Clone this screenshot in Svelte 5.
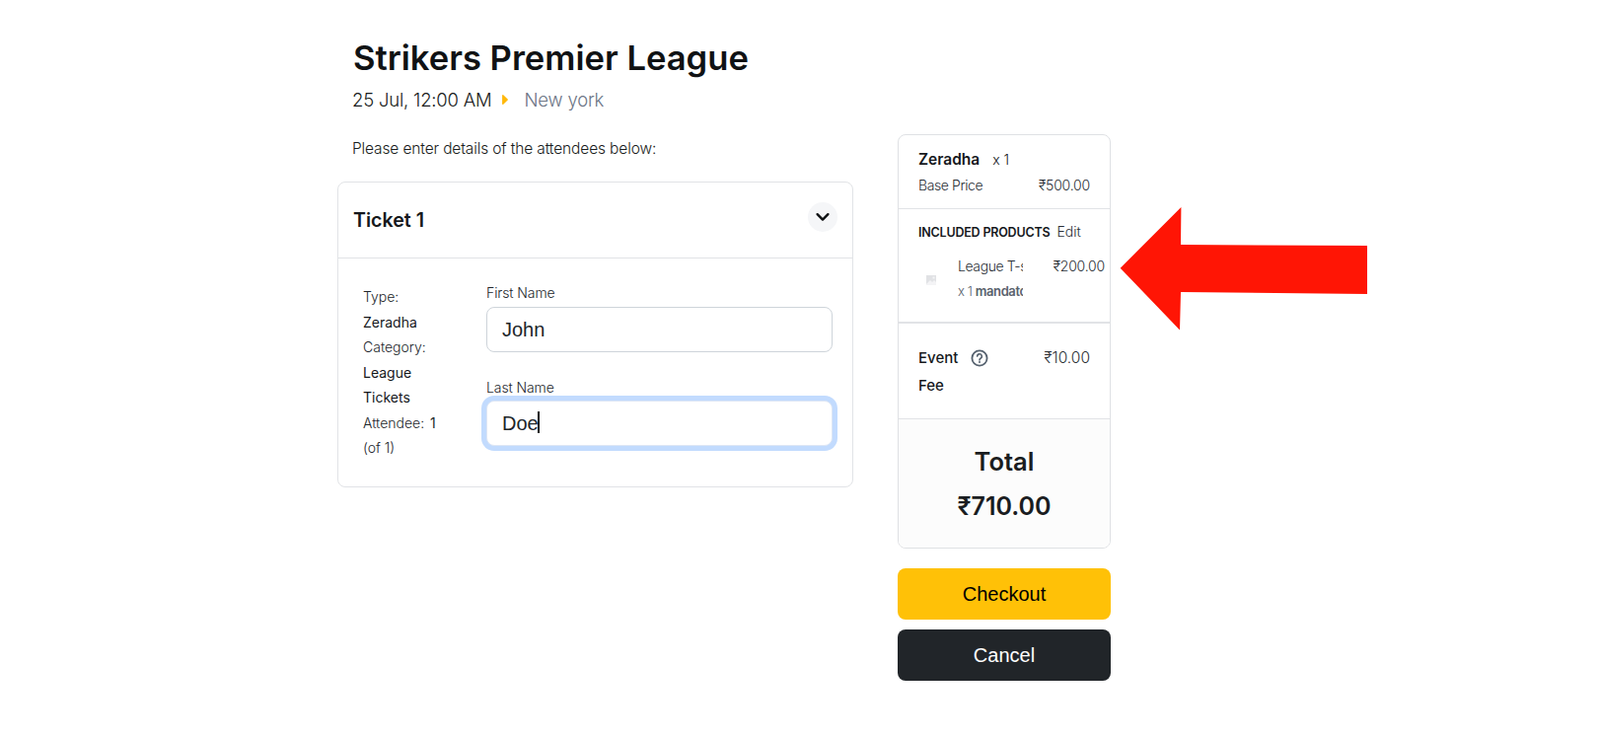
<script>
  const details = [
    { text: 'Type:', strong: false },
    { text: 'Zeradha', strong: true },
    { text: 'Category:', strong: false },
    { text: 'League', strong: true },
    { text: 'Tickets', strong: true },
    { text: 'Attendee:', strong: false, suffix: '1' },
    { text: '(of 1)', strong: false }
  ];
</script>

<div class="page">
  <header class="head">
    <h1>Strikers Premier League</h1>
    <p class="meta">
      <span>25 Jul, 12:00 AM</span>
      <svg class="tri" width="6" height="10" viewBox="0 0 6 10"><path d="M0.8 0.8 L5.2 5 L0.8 9.2 Z" fill="#ffb80a" stroke="#ffb80a" stroke-width="1.4" stroke-linejoin="round"/></svg>
      <span class="place">New york</span>
    </p>
  </header>

  <div class="columns">
    <main class="left">
      <p class="intro">Please enter details of the attendees below:</p>
      <section class="ticket">
        <div class="ticket-head">
          <h2>Ticket 1</h2>
          <button class="toggle" aria-label="Collapse">
            <svg width="16" height="16" viewBox="0 0 16 16"><path d="M2.6 5.2 L8 10.6 L13.4 5.2" fill="none" stroke="#0e1012" stroke-width="2.4" stroke-linecap="round" stroke-linejoin="round"/></svg>
          </button>
        </div>
        <div class="ticket-body">
          <div class="details">
            {#each details as d}
              <div class:strong={d.strong}>{d.text}{#if d.suffix}<b>{d.suffix}</b>{/if}</div>
            {/each}
          </div>
          <form class="fields">
            <label class="field">
              <span>First Name</span>
              <input value="John" />
            </label>
            <label class="field second">
              <span>Last Name</span>
              <span class="wrap">
                <input class="focus" value="Doe" />
                <i class="caret"></i>
              </span>
            </label>
          </form>
        </div>
      </section>
    </main>

    <aside class="right">
      <div class="summary">
        <div class="sec base">
          <div class="name"><b>Zeradha</b><span>x 1</span></div>
          <div class="line"><span>Base Price</span><span class="amt">₹500.00</span></div>
        </div>
        <div class="sec included">
          <div class="inc-title"><b>INCLUDED PRODUCTS</b><span>Edit</span></div>
          <div class="product">
            <svg class="thumb" width="10" height="10" viewBox="0 0 10 10"><rect width="10" height="10" fill="#e1e2e5"/><path d="M0 9 L4 5 L6 7 L8 5 L10 7 V10 H0 Z" fill="#f4f4f6"/><rect x="6.5" y="1.5" width="2" height="2" fill="#f4f4f6"/></svg>
            <div class="prod-text">
              <div class="prod-name">League T-shirt</div>
              <div class="prod-qty">x 1 <b>mandatory</b></div>
            </div>
            <span class="prod-price">₹200.00</span>
          </div>
        </div>
        <div class="sec fee">
          <div class="fee-name">
            <b>Event</b>
            <svg class="help" width="18" height="18" viewBox="0 0 18 18">
              <circle cx="9" cy="9" r="7.6" fill="none" stroke="#56626f" stroke-width="1.8"/>
              <path d="M6.7 7.1 A2.3 2.3 0 1 1 10 9.2 C9.3 9.6 9 10 9 10.9" fill="none" stroke="#56626f" stroke-width="1.6" stroke-linecap="round"/>
              <circle cx="9" cy="13.1" r="1" fill="#56626f"/>
            </svg>
            <b class="fee-second">Fee</b>
          </div>
          <span class="fee-price">₹10.00</span>
        </div>
        <div class="total">
          <div class="t-label">Total</div>
          <div class="t-value">₹710.00</div>
        </div>
      </div>
      <button class="btn checkout">Checkout</button>
      <button class="btn cancel">Cancel</button>
    </aside>
  </div>

  <svg class="arrow" width="256" height="130" viewBox="1134 207 256 130" aria-hidden="true">
    <path d="M1135.7 271.7 L1197.4 210 L1197 248 L1386 249 L1386 298 L1197 296 L1196 334.5 Z" fill="#ff1505"/>
  </svg>
</div>

<style>
  :global(body) {
    margin: 0;
    background: #fff;
    font-family: Inter, "Noto Sans", sans-serif;
    color: #15181c;
  }
  .page {
    position: relative;
    width: 1622px;
    height: 747px;
    padding-left: 342px;
    box-sizing: border-box;
    overflow: hidden;
  }
  .head {
    padding: 36px 0 0 16px;
    height: 136px;
    box-sizing: border-box;
  }
  h1 {
    margin: 0;
    font-size: 34.6px;
    line-height: 44px;
    font-weight: 600;
    color: #101214;
  }
  .meta {
    margin: 7px 0 0 -1px;
    display: flex;
    align-items: center;
    font-size: 18.5px;
    line-height: 28px;
    font-weight: 300;
    letter-spacing: -0.2px;
    color: #1a1d21;
  }
  .tri { margin: 0 17px 0 10px; }
  .place { color: #6d7686; }
  .columns {
    display: flex;
    align-items: flex-start;
    gap: 45px;
  }
  .left { width: 523px; }
  .intro {
    margin: 5px 0 0 15px;
    height: 43px;
    font-size: 15.5px;
    line-height: 20px;
    font-weight: 300;
    letter-spacing: -0.13px;
    color: #1a1d21;
  }
  .ticket {
    border: 1px solid #e1e3e6;
    border-radius: 8px;
    box-sizing: border-box;
    height: 310px;
  }
  .ticket-head {
    height: 77px;
    padding: 0 15px;
    display: flex;
    align-items: center;
    justify-content: space-between;
    border-bottom: 1px solid #e1e3e6;
    box-sizing: border-box;
  }
  h2 {
    margin: 0;
    font-size: 19.6px;
    font-weight: 600;
    color: #15181c;
  }
  .toggle {
    width: 30px;
    height: 30px;
    padding: 0;
    border: 0;
    border-radius: 50%;
    background: #f5f6f8;
    display: flex;
    align-items: center;
    justify-content: center;
    margin-bottom: 7px;
  }
  .ticket-body {
    display: flex;
    padding: 26px 20px 0 25px;
  }
  .details {
    width: 125px;
    padding-top: 0;
    font-size: 14px;
    line-height: 25.5px;
    font-weight: 300;
    color: #23272c;
  }
  .details .strong { font-weight: 400; color: #15181c; }
  .details b { font-weight: 400; margin-left: 6px; }
  .fields { flex: 1; }
  .field { display: block; }
  .field > span:first-child {
    display: block;
    font-size: 14px;
    line-height: 20px;
    font-weight: 300;
    letter-spacing: -0.1px;
    margin-top: -1px;
    margin-bottom: 4px;
    color: #23272c;
  }
  .second { margin-top: 27px; }
  .second > span:first-child { margin-bottom: 3px; }
  input {
    display: block;
    width: 100%;
    height: 46px;
    box-sizing: border-box;
    padding: 0 15px;
    border: 1px solid #ced4da;
    border-radius: 8px;
    outline: 0;
    background: #fff;
    font-family: "Liberation Sans", Arial, sans-serif;
    font-size: 20px;
    color: #212529;
    caret-color: transparent;
  }
  input.focus {
    border-color: #dde6f5;
    box-shadow: 0 0 0 5px #c2dbfe;
  }
  .wrap { display: block; position: relative; }
  .caret {
    position: absolute;
    left: 52px;
    top: 11px;
    width: 2px;
    height: 22px;
    background: #111;
  }

  .right { width: 216px; }
  .summary {
    border: 1px solid #dfe1e4;
    border-radius: 8px;
    overflow: hidden;
    height: 420px;
    box-sizing: border-box;
    display: flex;
    flex-direction: column;
  }
  .sec { padding: 0 20px; border-bottom: 1px solid #e1e3e6; box-sizing: border-box; }
  .base { height: 75px; padding-top: 15px; }
  .name { display: flex; align-items: baseline; font-size: 15.5px; line-height: 20px; }
  .name b { font-weight: 600; }
  .name span { margin-left: 13px; font-size: 14px; font-weight: 300; }
  .line {
    margin-top: 6px;
    display: flex;
    justify-content: space-between;
    font-size: 14px;
    line-height: 20px;
    font-weight: 300;
    letter-spacing: -0.4px;
    color: #2b3036;
  }
  .amt { letter-spacing: -0.2px; }
  .included { height: 116px; padding: 13px 5px 0 20px; border-bottom-width: 2px; }
  .inc-title { display: flex; align-items: baseline; font-size: 12.5px; line-height: 20px; white-space: nowrap; letter-spacing: -0.2px; }
  .inc-title b { font-weight: 600; }
  .inc-title span { margin-left: 7px; font-size: 14px; font-weight: 300; color: #2b3036; letter-spacing: 0; }
  .product { position: relative; display: flex; margin-top: 12px; font-size: 14px; font-weight: 300; color: #2b3036; }
  .thumb { margin: 21px 22px 0 8px; flex: none; }
  .prod-text { width: 66px; overflow: hidden; white-space: nowrap; line-height: 24px; letter-spacing: -0.4px; }
  .prod-qty { font-size: 13px; color: #5a626d; margin-top: 1px; }
  .prod-qty b { font-weight: 600; }
  .prod-price { margin-left: auto; line-height: 24px; letter-spacing: -0.2px; }
  .fee {
    height: 97px;
    padding-top: 21px;
    display: flex;
    justify-content: space-between;
    align-items: flex-start;
  }
  .fee-name {
    width: 80px;
    font-size: 15px;
    line-height: 28px;
  }
  .fee-name b { font-weight: 500; }
  .help { vertical-align: -4px; margin-left: 8px; }
  .fee-second { display: block; }
  .fee-price { font-size: 15.5px; font-weight: 300; line-height: 28px; letter-spacing: 0; color: #2b3036; }
  .total {
    flex: 1;
    background: #fcfcfc;
    text-align: center;
    padding-top: 27px;
  }
  .t-label { font-size: 25.5px; line-height: 32px; font-weight: 600; color: #1a1d21; }
  .t-value { margin-top: 13px; font-size: 25px; line-height: 32px; font-weight: 600; color: #1a1d21; }
  .btn {
    display: block;
    width: 100%;
    height: 52px;
    border: 0;
    border-radius: 8px;
    font-family: "Liberation Sans", Arial, sans-serif;
    font-size: 20px;
    padding: 0;
  }
  .checkout { margin-top: 20px; background: #ffc107; color: #000; }
  .cancel { margin-top: 10px; background: #212529; color: #fff; }
  .arrow {
    position: absolute;
    left: 1134px;
    top: 207px;
  }
</style>
